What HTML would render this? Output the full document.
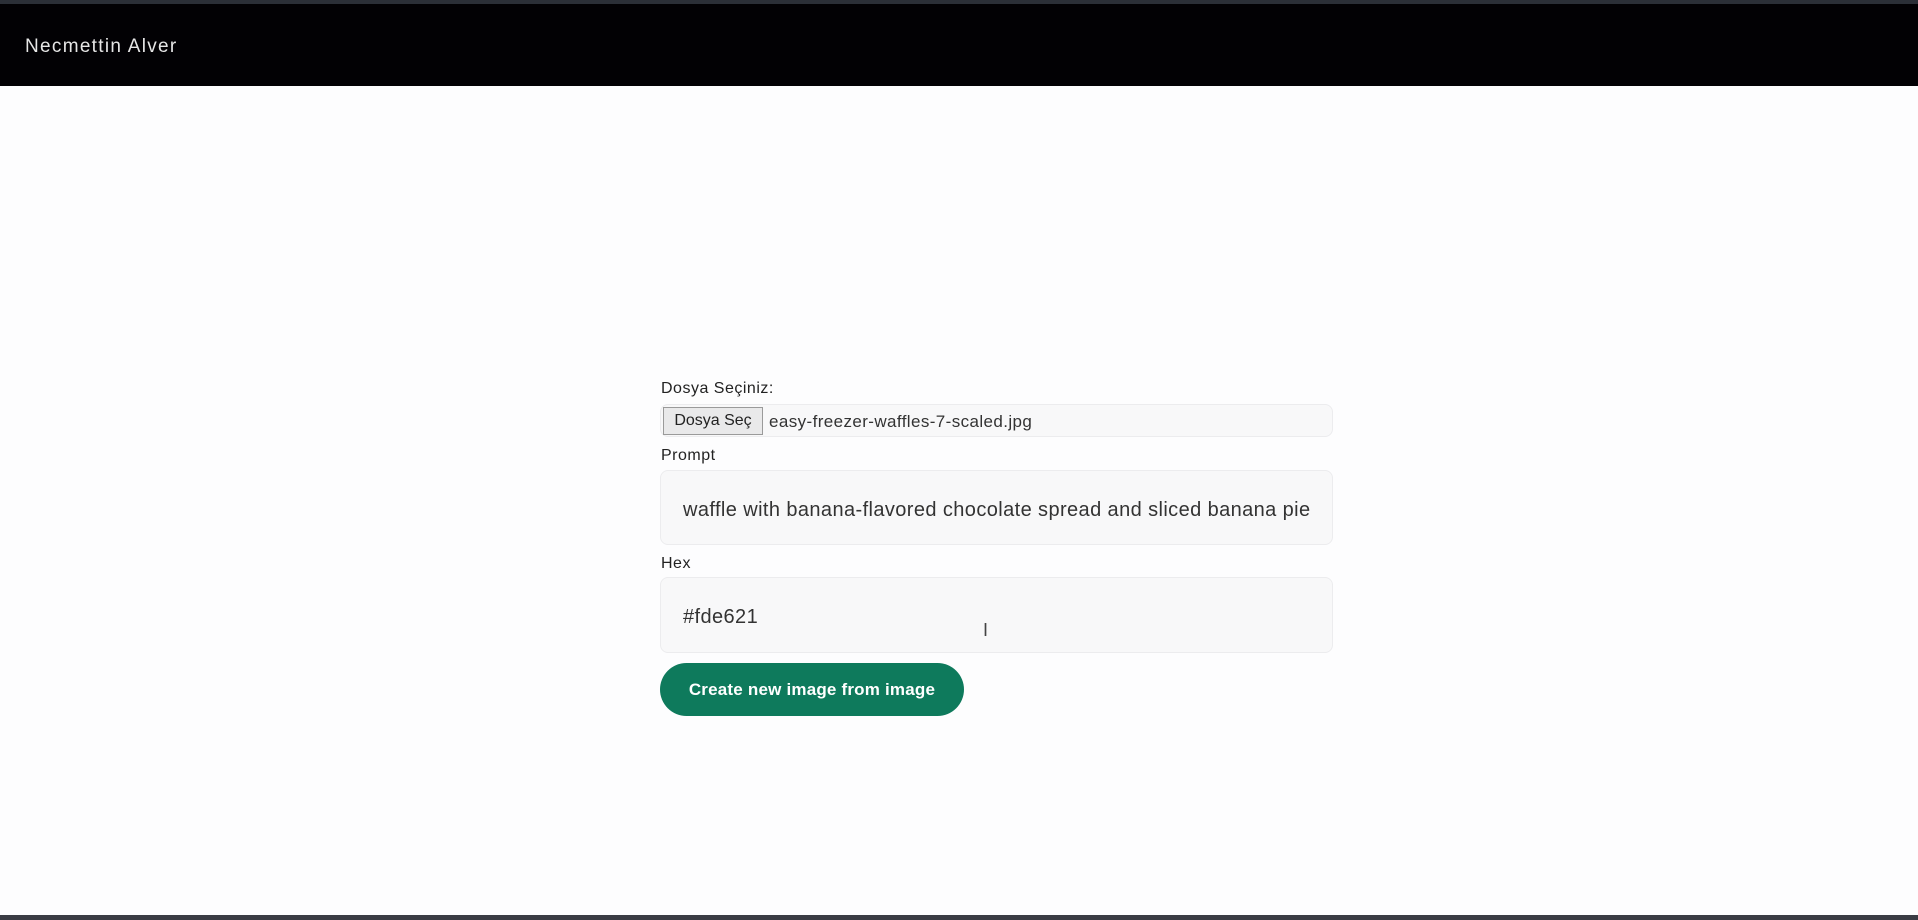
<!DOCTYPE html>
<html><head><meta charset="utf-8"><style>
html,body{margin:0;padding:0;width:1918px;height:920px;overflow:hidden;background:#fdfdfe;font-family:"Liberation Sans",sans-serif;position:relative}
.top{position:absolute;left:0;top:0;width:1918px;height:4px;background:#2b2f37}
.nav{position:absolute;left:0;top:4px;width:1918px;height:82px;background:#020104}
.nav span{position:absolute;left:25px;top:32px;color:#e6e6e6;font-size:19px;letter-spacing:1.3px}
.bot{position:absolute;left:0;top:915px;width:1918px;height:5px;background:#3a3c44}
.lbl{position:absolute;left:661px;font-size:16px;color:#222;letter-spacing:0.5px}
.box{position:absolute;left:660px;width:673px;background:#f8f8f9;border:1px solid #ececee;border-radius:8px;box-sizing:border-box}
.file{top:404px;height:33px}
.fbtn{position:absolute;left:2px;top:2px;height:28px;width:100px;background:#e9e9ea;border:1px solid #9a9a9a;box-sizing:border-box;font-size:16px;color:#222;line-height:26px;text-align:center}
.fname{position:absolute;left:108px;top:7px;font-size:17px;color:#333;letter-spacing:0.4px}
.inp{font-size:20px;color:#333;letter-spacing:0.4px}
.inp span{position:absolute;left:22px}
.btn{position:absolute;left:660px;top:663px;width:304px;height:53px;background:#0e7a5c;border-radius:27px;color:#fff;font-size:17px;font-weight:bold;text-align:center;line-height:53px;letter-spacing:0.2px}
</style></head><body>
<div class="top"></div>
<div class="nav"><span>Necmettin Alver</span></div>
<div class="lbl" style="top:380px">Dosya Seçiniz:</div>
<div class="box file"><div class="fbtn">Dosya Seç</div><div class="fname">easy-freezer-waffles-7-scaled.jpg</div></div>
<div class="lbl" style="top:447px">Prompt</div>
<div class="box inp" style="top:470px;height:75px"><span style="top:28px">waffle with banana-flavored chocolate spread and sliced banana pie</span></div>
<div class="lbl" style="top:555px">Hex</div>
<div class="box inp" style="top:577px;height:76px"><span style="top:28px">#fde621</span></div>
<div style="position:absolute;left:983px;top:620px;font-size:18px;color:#444">I</div>
<div class="btn">Create new image from image</div>
<div class="bot"></div>
</body></html>
